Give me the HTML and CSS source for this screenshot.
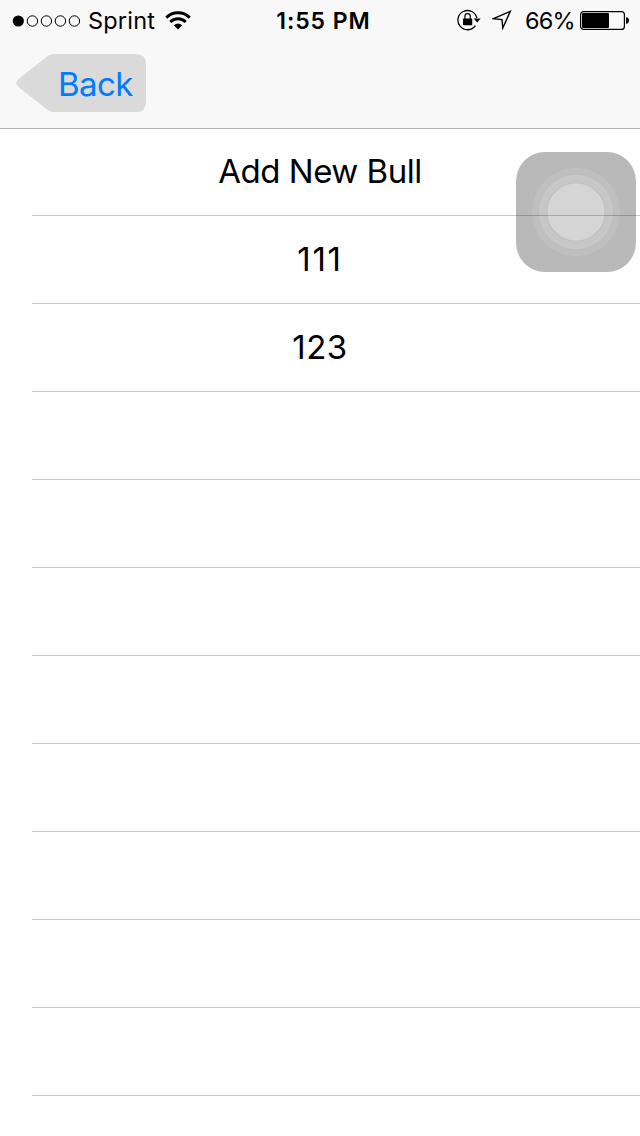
FILE: index.html
```
<!DOCTYPE html>
<html lang="en">
<head>
<meta charset="utf-8">
<title>Bulls</title>
<link rel="stylesheet" href="styles.css">
</head>
<body>
<header class="header">
  <div class="status">
    <div class="status-left">
      <svg class="signal" width="68" height="12" viewBox="0 0 68 12"><circle cx="6.3" cy="6" r="5.6"/><g fill="none" stroke="#000" stroke-width="1"><circle cx="20.4" cy="6" r="5.2"/><circle cx="34.4" cy="6" r="5.2"/><circle cx="48.4" cy="6" r="5.2"/><circle cx="62.4" cy="6" r="5.2"/></g></svg>
      <span class="carrier">Sprint</span>
      <svg class="wifi" width="26" height="19" viewBox="0 0 26 19"><g fill="none" stroke="#000" stroke-width="3"><path d="M1.3 6.6A16.6 16.6 0 0 1 24.7 6.6"/><path d="M5.3 11A11 11 0 0 1 20.7 11"/></g><path d="M8.8 14.2Q13 10.6 17.2 14.2L13 18.4Z"/></svg>
    </div>
    <span class="clock">1:55 PM</span>
    <div class="status-right">
      <svg class="lock" width="24" height="22" viewBox="0 0 24 22"><path d="M18.4 16.6A9.6 9.6 0 1 1 19.9 9.2" fill="none" stroke="#000" stroke-width="1.3"/><path d="M16.6 9.4H23.7L20.2 13.4Z"/><rect x="6" y="9.4" width="9.2" height="6.8" rx=".6"/><path d="M7.9 10V7.4a2.7 2.7 0 0 1 5.4 0V10" fill="none" stroke="#000" stroke-width="1.2"/></svg>
      <svg class="location" width="20" height="20" viewBox="0 0 20 20"><path d="M18.3 1.3L1.5 8.6L10 9.6L10.8 18Z" fill="none" stroke="#000" stroke-width="1.4"/></svg>
      <span class="percent">66%</span>
      <svg class="battery" width="50" height="20" viewBox="0 0 50 20"><rect x=".6" y=".6" width="43.8" height="17.8" rx="3" fill="none" stroke="#000" stroke-width="1.2"/><rect x="2" y="2" width="27" height="15" rx="1"/><path d="M46 6.2Q49 6.6 49 9.5T46 12.8Z"/></svg>
    </div>
  </div>
  <nav class="nav">
    <a class="back">
      <svg class="back-shape" width="130" height="58" viewBox="0 0 130 58"><path d="M38 0H120Q130 0 130 10V48Q130 58 120 58H38Q34 58 31 55.5L2.5 33Q-2 29 2.5 25L31 2.5Q34 0 38 0Z" fill="#dadada"/></svg>
      <span class="back-label">Back</span>
    </a>
  </nav>
</header>
<main class="list">
  <div class="row first"><span class="label add">Add New Bull</span></div>
  <div class="row"><span class="label ones">111</span></div>
  <div class="row"><span class="label num">123</span></div>
  <div class="row"></div>
  <div class="row"></div>
  <div class="row"></div>
  <div class="row"></div>
  <div class="row"></div>
  <div class="row"></div>
  <div class="row"></div>
  <div class="row"></div>
</main>
<div class="assist"></div>
</body>
</html>
```
FILE: styles.css
```
* { box-sizing: border-box; }
body {
  margin: 0;
  height: 1136px;
  overflow: hidden;
  position: relative;
  background: #fff;
  color: #000;
  font-family: Inter, "Liberation Sans", sans-serif;
}
svg { display: block; flex: none; }
.header {
  height: 129px;
  background: #f8f8f8;
  border-bottom: 1px solid #b2b2b2;
}
.status {
  height: 40px;
  display: grid;
  grid-template-columns: 1fr auto 1fr;
  align-items: center;
  line-height: 40px;
  font-size: 23.5px;
  white-space: nowrap;
}
.status-left { display: flex; align-items: center; padding-left: 12px; }
.carrier { margin-left: 8px; width: 68px; letter-spacing: 0.2px; padding-top: 1px; }
.wifi { margin-left: 9px; }
.clock { font-weight: 600; font-size: 23px; padding: 1px 0 0 7px; letter-spacing: 0.95px; }
.status-right { display: flex; align-items: center; justify-content: flex-end; padding-right: 10px; }
.lock { margin-bottom: 2px; }
.location { margin-left: 11px; margin-bottom: 1px; }
.percent { margin-left: 13px; width: 50px; padding-top: 1px; letter-spacing: -0.8px; }
.battery { margin-left: 5px; }
.nav { padding: 14px 0 0 16px; }
.back { display: grid; width: 130px; height: 58px; }
.back-shape, .back-label { grid-area: 1 / 1; }
.back-label {
  z-index: 1;
  padding-left: 42px;
  line-height: 60px;
  font-size: 33px;
  letter-spacing: -0.6px;
  color: #007aff;
}
.row {
  height: 88px;
  margin-left: 32px;
  padding-right: 32px;
  border-bottom: 1px solid #c8c7cc;
  display: flex;
  justify-content: center;
  font-size: 33px;
  line-height: 86px;
}
.first { height: 87px; line-height: 84px; }
.label { white-space: nowrap; }
.add { letter-spacing: -0.5px; }
.ones { letter-spacing: 1.8px; }
.num { letter-spacing: 0.5px; }
.assist {
  position: absolute;
  left: 516px;
  top: 152px;
  width: 120px;
  height: 120px;
  border-radius: 29px;
  background: radial-gradient(circle at 60px 60px,
    rgba(0,0,0,.165) 28px, rgba(0,0,0,.25) 29px, rgba(0,0,0,.225) 30px,
    rgba(0,0,0,.22) 36.5px, rgba(0,0,0,.26) 37.5px, rgba(0,0,0,.25) 38.5px,
    rgba(0,0,0,.25) 43.5px, rgba(0,0,0,.275) 44.5px);
}
```
